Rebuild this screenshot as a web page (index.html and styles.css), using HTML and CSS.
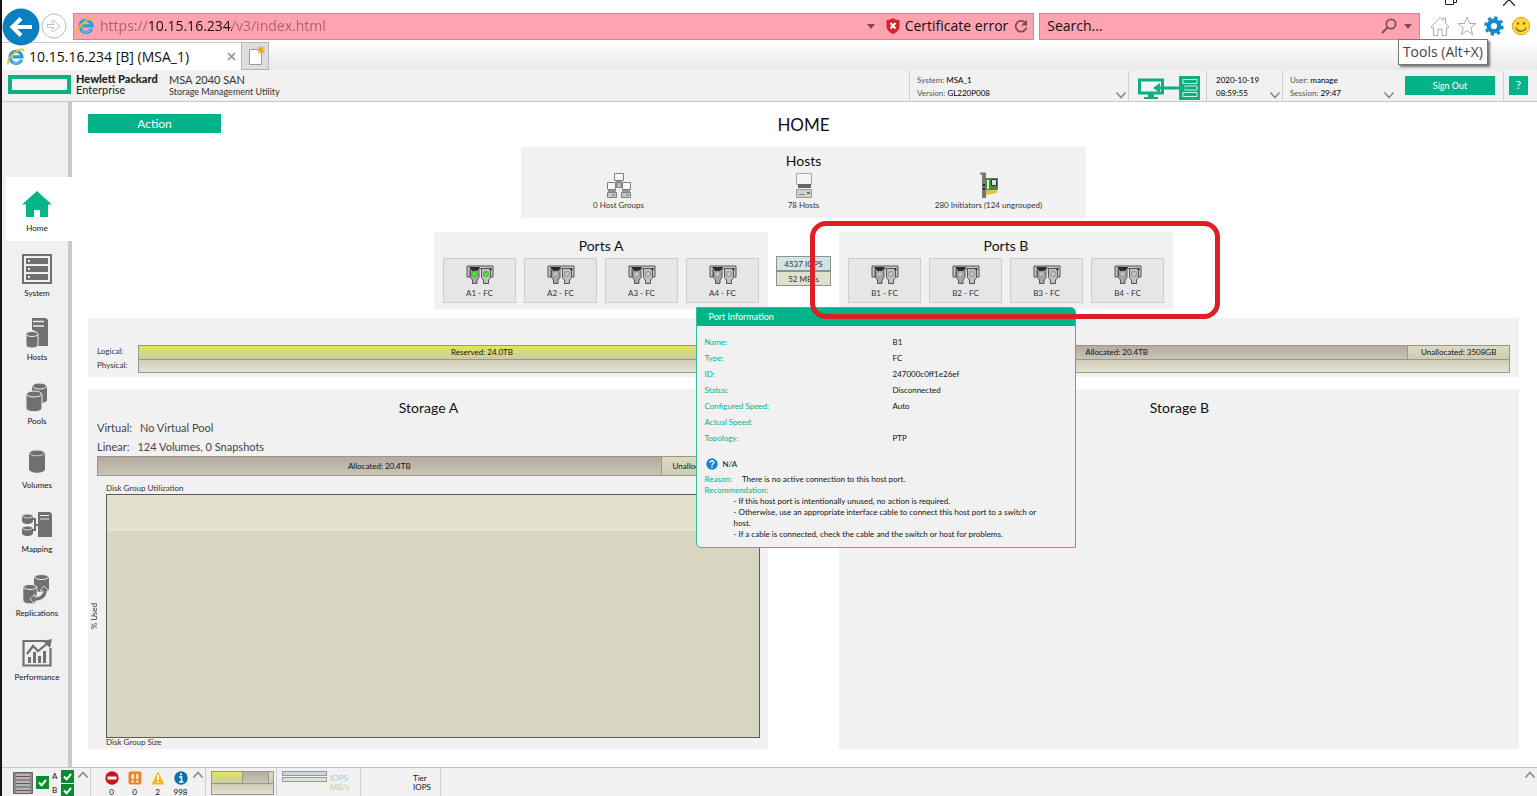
FILE: index.html
```html
<!DOCTYPE html>
<html lang="en">
<head>
<meta charset="utf-8">
<title>10.15.16.234 [B] (MSA_1)</title>
<link rel="stylesheet" href="styles.css">
</head>
<body>
<svg class="defs" width="0" height="0" aria-hidden="true">
  <defs>
    <symbol id="ie" viewBox="0 0 18 18">
      <path d="M14.6 11.6A6 6 0 1 1 15 8.800H5.500" fill="none" stroke="#2a9fdc" stroke-width="3.200"/>
      <path d="M14 12a5.600 5.600 0 0 1-9.500 1" fill="none" stroke="#7fd0f5" stroke-width="1"/>
      <path d="M1.500 16.500C-.5 14 3 8 8 4.500S17 0 16.500 3.500" fill="none" stroke="#f3b928" stroke-width="1.600"/>
    </symbol>
    <symbol id="down" viewBox="0 0 12 8"><path d="M1.500 1.500L6 6.500l4.500-5" fill="none" stroke="#8c8c8c" stroke-width="1.700"/></symbol>
    <symbol id="up" viewBox="0 0 12 8"><path d="M1.500 6.500L6 1.500l4.500 5" fill="none" stroke="#8c8c8c" stroke-width="1.700"/></symbol>
    <symbol id="port" viewBox="0 0 28 20">
      <path d="M1 1h26v11h-3V4H4v8H1z" fill="#c4c4c4" stroke="#555" stroke-width="1"/>
      <path d="M3 2h11l-2 3H6z" fill="#222"/>
      <path d="M4.500 5.500L6 3.500h5.500L13 5.500v7l-2 2.500v3.500H6.500V15l-2-2.500z" fill="#a9a9a9" stroke="#555"/>
      <path d="M15.500 3.500h8l1 2v7l-2 2.500v3.500h-5V15l-2-2.500z" fill="#c2c2c2" stroke="#555"/>
      <path d="M3.500 2h10l-2 3.500L7 7z" fill="#2a2a2a"/>
      <circle cx="8.500" cy="9" r="3" fill="currentColor" stroke="#8a8a8a" stroke-width=".6"/>
      <circle cx="20" cy="9" r="3" fill="currentColor" stroke="#8a8a8a" stroke-width=".6"/>
      <path d="M7.500 10l2-2M19 10l2-2" stroke="#eee" stroke-width=".8"/>
      <path d="M23.500 3.200h2v2h-2z" fill="#222"/>
    </symbol>
    <symbol id="check" viewBox="0 0 13 13"><path d="M0 0h13v13H0z" fill="#0b8a2f"/><path d="M3 6.500l2.600 2.800L10 4" fill="none" stroke="#fff" stroke-width="2"/></symbol>
  </defs>
</svg>

<header class="browser">
  <div class="address-row">
    <button class="nav-back" aria-label="Back"><svg viewBox="0 0 38 38"><circle cx="19" cy="19" r="18.500" fill="#0b7fc0"/><path d="M30 19H11M19 10.500L10.500 19l8.500 8.500" fill="none" stroke="#fff" stroke-width="4"/></svg></button>
    <button class="nav-forward" aria-label="Forward"><svg viewBox="0 0 26 26"><circle cx="13" cy="13" r="12" fill="#fff" stroke="#bdbdbd"/><path d="M6.500 11.500h6.500L10.500 9l1.500-2 7 6-7 6-1.500-2 2.500-2.500H6.500z" fill="#fff" stroke="#c0c0c0"/></svg></button>
    <div class="field url">
      <svg class="ie" aria-hidden="true"><use href="#ie"/></svg>
      <input class="url-input" type="text" aria-label="Address" value="https://10.15.16.234/v3/index.html">
      <svg class="caret" viewBox="0 0 8 5"><path d="M0 0h8L4 5z" fill="#7c4b53"/></svg>
      <svg class="shield" viewBox="0 0 14 16"><path d="M7 0c2 1.500 4 2 6.500 2v6c0 4-3 6.500-6.500 8C3.500 14.500.500 12 .500 8V2C3 2 5 1.500 7 0z" fill="#d3242c"/><path d="M4.500 5l5 5.500M9.500 5l-5 5.500" stroke="#fff" stroke-width="2"/></svg>
      <button class="cert">Certificate error</button>
      <button class="refresh" aria-label="Refresh"><svg viewBox="0 0 14 14"><path d="M11 3A5.400 5.400 0 1 0 12.400 8" fill="none" stroke="#77505a" stroke-width="1.800"/><path d="M13 0v6H7z" fill="#77505a"/></svg></button>
    </div>
    <div class="field search">
      <input class="search-input" type="text" aria-label="Search" value="Search...">
      <svg class="lens" viewBox="0 0 16 16"><circle cx="10" cy="6" r="4.700" fill="none" stroke="#80535c" stroke-width="1.800"/><path d="M6.500 9.500L1 15" stroke="#80535c" stroke-width="2.200"/></svg>
      <svg class="caret" viewBox="0 0 8 5"><path d="M0 0h8L4 5z" fill="#7c4b53"/></svg>
    </div>
    <div class="tools">
      <button aria-label="Home"><svg viewBox="0 0 20 20"><path d="M1 11L10 1.500l3 3V2h2.500v5l3.500 4-1.500 1-1-1v8.500H12V13H8v6.500H3.500V11l-1 1z" fill="#fff" stroke="#aaa"/></svg></button>
      <button aria-label="Favorites"><svg viewBox="0 0 20 20"><path d="M10 1l2.500 6.500h6.500l-5.300 4.200 2 7L10 14.500l-5.700 4.200 2-7L1 7.500h6.500z" fill="#fff" stroke="#aaa"/></svg></button>
      <button aria-label="Tools"><svg viewBox="0 0 20 20"><circle cx="10" cy="10" r="5.300" fill="none" stroke="#1687ca" stroke-width="4.400"/><circle cx="10" cy="10" r="8.300" fill="none" stroke="#1687ca" stroke-width="2.800" stroke-dasharray="3.260 3.260"/></svg></button>
      <button aria-label="Feedback"><svg viewBox="0 0 20 20"><circle cx="10" cy="10" r="8.700" fill="#ffd83d" stroke="#d9a820"/><circle cx="7" cy="7.500" r="1.300" fill="#8b6a12"/><circle cx="13" cy="7.500" r="1.300" fill="#8b6a12"/><path d="M5 11.500c1.500 5 8.500 5 10 0" fill="none" stroke="#8b6a12" stroke-width="1.300"/></svg></button>
    </div>
    <div class="window-controls" aria-hidden="true">
      <svg viewBox="0 0 12 6"><path d="M.500 0v4.500h8V0M8.500 2.500h3V0" fill="none" stroke="#222"/></svg>
      <svg viewBox="0 0 12 6"><path d="M0 6l6-6.500L12 6" fill="none" stroke="#222" stroke-width="1.200"/></svg>
    </div>
    <div class="tooltip" role="tooltip">Tools (Alt+X)</div>
  </div>
  <div class="tabs">
    <div class="tab"><svg class="ie" aria-hidden="true"><use href="#ie"/></svg><span class="tab-title">10.15.16.234 [B] (MSA_1)</span><button class="tab-close" aria-label="Close tab"><svg viewBox="0 0 9 9"><path d="M1 1l7 7M8 1L1 8" stroke="#8a8a8a" stroke-width="1.500"/></svg></button></div>
    <button class="new-tab" aria-label="New tab"><svg viewBox="0 0 18 20"><path d="M1.500 3.500h12v15h-12z" fill="#fff" stroke="#999"/><path d="M13 0v8M9 4h8M10 1l6 6M16 1l-6 6" stroke="#f0a62b" stroke-width="1.300"/></svg></button>
  </div>
</header>

<div class="app-header">
  <svg class="hpe" viewBox="0 0 63 19"><path d="M2 2h59v15H2z" fill="#f5f5f5" stroke="#0eb083" stroke-width="4"/></svg>
  <div class="brand"><b>Hewlett Packard</b><span>Enterprise</span></div>
  <div class="product"><span>MSA 2040 SAN</span><span class="product-sub">Storage Management Utility</span></div>
  <section class="cell system-cell"><p>System: <b>MSA_1</b></p><p>Version: <b>GL220P008</b></p><svg class="chev"><use href="#down"/></svg></section>
  <section class="cell link-cell"><svg viewBox="0 0 64 24"><path d="M2.500 4h23v13h-23z" fill="#f5f5f5" stroke="#0fae82" stroke-width="3"/><path d="M11 18h6v3h4v2H7v-2h4z" fill="#0fae82"/><path d="M42 0h21v24H42v-7l4-5-4-5z" fill="#0fae82"/><path d="M46 3.500h14v4H46zM48 10h12v4H48zM46 16.500h14v4H46z" fill="#0fae82" stroke="#cdeee2"/><path d="M21 12h25" stroke="#0fae82" stroke-width="3"/><path d="M16 12l7-5v10zM49 12l-7-5v10z" fill="#0fae82"/></svg></section>
  <section class="cell time-cell"><p><b>2020-10-19</b></p><p><b>08:59:55</b></p><svg class="chev"><use href="#down"/></svg></section>
  <section class="cell user-cell"><p>User: <b>manage</b></p><p>Session: <b>29:47</b></p><svg class="chev"><use href="#down"/></svg></section>
  <button class="green sign-out">Sign Out</button>
  <div class="help-cell"><button class="green help" aria-label="Help">?</button></div>
</div>

<div class="workspace">
  <nav class="sidebar">
    <a class="active" href="#home"><svg viewBox="0 0 30 30"><path d="M15 2L0 15.500h4V28h8v-7h6v7h8V15.500h4L26 12z" fill="#05b487"/></svg>Home</a>
    <a href="#system"><svg viewBox="0 0 30 30"><path d="M1 1h28v28H1z" fill="#efefef" stroke="#707070" stroke-width="2"/><path d="M4 4h22v6H4zM4 12h22v6H4zM4 20h22v6H4z" fill="#707070"/><path d="M6 6h2v2H6zM6 14h2v2H6zM6 22h2v2H6z" fill="#eee"/></svg>System</a>
    <a href="#hosts"><svg viewBox="0 0 30 30"><path d="M10 0h14l2 2v26H16V17c-1-4-5-5-6-5z" fill="#707070"/><path d="M11 3.500h11M11 8h11" stroke="#eee" stroke-width="1.500"/><path d="M4 16v11c0 4 12 4 12 0V16" fill="#707070" stroke="#eee"/><ellipse cx="10" cy="16" rx="6" ry="2.500" fill="#707070" stroke="#eee"/></svg>Hosts</a>
    <a href="#pools"><svg viewBox="0 0 30 30"><path d="M10 4v14c0 4 15 4 15 0V4" fill="#707070"/><ellipse cx="17.500" cy="4" rx="7" ry="3" fill="#707070" stroke="#eee"/><path d="M4 12v14c0 5 16 5 16 0V12" fill="#707070" stroke="#eee"/><ellipse cx="12" cy="12" rx="7.500" ry="3" fill="#707070" stroke="#eee"/></svg>Pools</a>
    <a href="#volumes"><svg viewBox="0 0 30 30"><path d="M7 7v16c0 5 16 5 16 0V7z" fill="#707070"/><ellipse cx="15" cy="7" rx="7.500" ry="2.800" fill="#707070" stroke="#ccc"/></svg>Volumes</a>
    <a href="#mapping"><svg viewBox="0 0 30 30"><path d="M16 2h12l2 2v23H16z" fill="#707070"/><path d="M18 5.500h9M18 9h9" stroke="#eee"/><path d="M10 9h3v11h-3M13 15h4" fill="none" stroke="#707070" stroke-width="2"/><path d="M0 6v5c0 4 11 4 11 0V6zM0 18v5c0 4 11 4 11 0v-5z" fill="#707070"/><ellipse cx="5.500" cy="6" rx="5" ry="2" fill="#707070" stroke="#eee" stroke-width=".8"/><ellipse cx="5.500" cy="18" rx="5" ry="2" fill="#707070" stroke="#eee" stroke-width=".8"/></svg>Mapping</a>
    <a href="#replications"><svg viewBox="0 0 30 30"><path d="M12 3v12c0 4 15 4 15 0V3" fill="#707070"/><ellipse cx="19.500" cy="3" rx="7" ry="2.500" fill="#707070" stroke="#eee"/><path d="M1 13v13c0 5 14 5 14 0V13" fill="#707070" stroke="#eee" stroke-width=".7"/><ellipse cx="8" cy="13" rx="6.500" ry="2.500" fill="#707070" stroke="#eee"/><path d="M8 25l5-5v3c5 0 8-3 8-6h-3l4-5 5 5h-2c0 6-5 10-12 10v3z" fill="#707070" stroke="#eee" stroke-width=".8"/></svg>Replications</a>
    <a href="#performance"><svg viewBox="0 0 30 30"><path d="M24 3H1.500v24.500h27V10" fill="none" stroke="#707070" stroke-width="2.200"/><path d="M5 16l6-8 5 5L26 5" fill="none" stroke="#707070" stroke-width="2.200"/><path d="M21 3l9-2-2 9z" fill="#707070"/><path d="M7.500 19v6M12.500 14v11M17.500 18v7M22.500 13v12" stroke="#707070" stroke-width="3"/></svg>Performance</a>
  </nav>

  <main class="main">
    <div class="title-row">
      <button class="green action">Action</button>
      <h1>HOME</h1>
    </div>

    <section class="panel hosts">
      <h2>Hosts</h2>
      <div class="host-items">
        <div class="host-item"><svg viewBox="0 0 26 26"><g fill="#f8f8f8" stroke="#808080"><path d="M8.500 1.500h9v7h-9zM1.500 10.500h8v7h-8zM16.500 10.500h8v7h-8z"/><path d="M1.500 20.500h9v5h-9zM15.500 20.500h9v5h-9z" fill="#c7c7c7"/><path d="M10.500 10.500h5v5h-5z" fill="#bbb"/></g><path d="M2 19h8M16 19h8M10 9h6" stroke="#777" stroke-width="1.500"/><path d="M6 23h3M20 23h3" stroke="#666"/></svg>0 Host Groups</div>
        <div class="host-item"><svg viewBox="0 0 26 26"><path d="M5.500 1.500h15v11h-15z" fill="#f5f5f5" stroke="#aaa"/><path d="M7 12h13v4H7z" fill="#666"/><path d="M5.500 17.500h15v8h-15z" fill="#d0d0d0" stroke="#999"/><path d="M8 22.500h6" stroke="#888"/><path d="M16 20h3v2h-3z" fill="#4c8d4c"/></svg>78 Hosts</div>
        <div class="host-item"><svg viewBox="0 0 26 26"><path d="M4 .500h6V26H6V2.500H4z" fill="#777"/><path d="M10 6h12v12H10z" fill="#43923b"/><path d="M10 18h11v3l-11 2z" fill="#e0c53b"/><path d="M15.500 7.500h5v6h-5z" fill="#ddd" stroke="#333"/><path d="M12 8v9" stroke="#d7ecd1" stroke-width="2"/><path d="M7 12h2v2H7zM7 16h2v2H7z" fill="#222"/></svg>280 Initiators (124 ungrouped)</div>
      </div>
    </section>

    <div class="split ports-row">
      <section class="panel ports">
        <h2>Ports A</h2>
        <div class="port-list">
          <button class="port on"><svg><use href="#port"/></svg>A1 - FC</button>
          <button class="port"><svg><use href="#port"/></svg>A2 - FC</button>
          <button class="port"><svg><use href="#port"/></svg>A3 - FC</button>
          <button class="port"><svg><use href="#port"/></svg>A4 - FC</button>
        </div>
      </section>
      <div class="rates"><span class="iops">4537 IOPS</span><span class="mbs">52 MB/s</span></div>
      <section class="panel ports">
        <h2>Ports B</h2>
        <div class="port-list">
          <button class="port"><svg><use href="#port"/></svg>B1 - FC</button>
          <button class="port"><svg><use href="#port"/></svg>B2 - FC</button>
          <button class="port"><svg><use href="#port"/></svg>B3 - FC</button>
          <button class="port"><svg><use href="#port"/></svg>B4 - FC</button>
        </div>
      </section>

      <aside class="popup">
        <h3>Port Information</h3>
        <div class="popup-body">
          <dl>
            <dt>Name:</dt><dd>B1</dd>
            <dt>Type:</dt><dd>FC</dd>
            <dt>ID:</dt><dd>247000c0ff1e26ef</dd>
            <dt>Status:</dt><dd>Disconnected</dd>
            <dt>Configured Speed:</dt><dd>Auto</dd>
            <dt>Actual Speed:</dt><dd></dd>
            <dt>Topology:</dt><dd>PTP</dd>
          </dl>
          <p class="health"><svg viewBox="0 0 12 12"><circle cx="6" cy="6" r="5.700" fill="#1482c8"/><path d="M4 4.700C4 2 8.200 2.200 8 4.500 7.900 5.800 6 5.700 6 7.500" fill="none" stroke="#fff" stroke-width="1.300"/><circle cx="6" cy="9.300" r=".8" fill="#fff"/></svg>N/A</p>
          <p class="reason"><em>Reason:</em><span>There is no active connection to this host port.</span></p>
          <p><em>Recommendation:</em></p>
          <div class="advice">
            <p>- If this host port is intentionally unused, no action is required.</p>
            <p>- Otherwise, use an appropriate interface cable to connect this host port to a switch or host.</p>
            <p>- If a cable is connected, check the cable and the switch or host for problems.</p>
          </div>
        </div>
      </aside>
      <div class="highlight" aria-hidden="true"></div>
    </div>

    <section class="panel capacity">
      <span>Logical:</span>
      <div class="bar"><div class="seg reserved">Reserved: 24.0TB</div><div class="seg allocated">Allocated: 20.4TB</div><div class="seg free">Unallocated: 3508GB</div></div>
      <span>Physical:</span>
      <div class="bar physical"></div>
    </section>

    <div class="split storage-row">
      <section class="panel storage">
        <h2>Storage A</h2>
        <p class="pool"><span>Virtual:</span>No Virtual Pool</p>
        <p class="pool"><span>Linear:</span>124 Volumes, 0 Snapshots</p>
        <div class="bar pool-bar"><div class="seg allocated">Allocated: 20.4TB</div><div class="seg free">Unallocated: 3508GB</div></div>
        <div class="usage">
          <span class="usage-title">Disk Group Utilization</span>
          <span class="usage-y">% Used</span>
          <div class="chart"></div>
          <span class="usage-x">Disk Group Size</span>
        </div>
      </section>
      <section class="panel storage"><h2>Storage B</h2></section>
    </div>
  </main>
</div>

<footer class="status">
  <div class="cell health-cell">
    <svg class="rack" viewBox="0 0 20 22"><path d="M.500.500h19v21H.500z" fill="#8a8a8a" stroke="#666"/><path d="M3 3h14M3 6h14M3 10h14M3 13h14M3 17h14M3 20h14" stroke="#e6dede" stroke-width="1"/><path d="M3 4.500h14M3 11.500h14M3 18.500h14" stroke="#7d4a50"/></svg>
    <svg class="tick"><use href="#check"/></svg>
    <div class="controllers"><span>A</span><svg class="tick"><use href="#check"/></svg><span>B</span><svg class="tick"><use href="#check"/></svg></div>
    <svg class="chev"><use href="#up"/></svg>
  </div>
  <div class="cell alerts">
    <span class="alert"><svg viewBox="0 0 14 14"><circle cx="7" cy="7" r="6.700" fill="#c4161c"/><path d="M2.500 5.500h9v3h-9z" fill="#fff"/></svg>0</span>
    <span class="alert"><svg viewBox="0 0 14 14"><rect x=".5" y=".5" width="13" height="13" rx="2" fill="#f08326"/><path d="M4.700 3v5M9.300 3v5M4.700 9.500v2M9.300 9.500v2" stroke="#fff" stroke-width="2"/></svg>0</span>
    <span class="alert"><svg viewBox="0 0 14 14"><path d="M7 .500L13.500 13.500H.500z" fill="#f5b51d"/><path d="M7 4v5M7 10.300v1.700" stroke="#fff" stroke-width="1.800"/></svg>2</span>
    <span class="alert"><svg viewBox="0 0 14 14"><circle cx="7" cy="7" r="6.700" fill="#0b6fa9"/><path d="M5 6h2.500v5M5 11h4.500" fill="none" stroke="#fff" stroke-width="1.600"/><circle cx="7" cy="3.300" r="1.100" fill="#fff"/></svg>998</span>
    <svg class="chev"><use href="#up"/></svg>
  </div>
  <div class="cell mini-cell"><div class="mini"><div class="bar"><div class="seg reserved"></div><div class="seg allocated"></div><div class="seg free"></div></div><div class="bar physical"></div></div></div>
  <div class="cell io-cell"><div class="io-bars"><i class="io-blue"></i><i class="io-green"></i></div><div class="io-labels"><span class="io-a">IOPS</span><span class="io-b">MB/s</span></div></div>
  <div class="cell tier-cell"><span>Tier</span><span>IOPS</span></div>
  <svg class="chev last"><use href="#up"/></svg>
</footer>
</body>
</html>
```

FILE: styles.css
```css
* { box-sizing: border-box; }
body {
  margin: 0;
  min-height: 100vh;
  display: flex;
  flex-direction: column;
  border-left: 2px solid #17171b;
  background: #fff;
  color: #111;
  font: 8px/12px Lato, "Open Sans", sans-serif;
}
h1, h2, h3, p, dl, dd { margin: 0; font-weight: 400; }
button, input { font: inherit; color: inherit; border: 0; padding: 0; background: none; }
button { cursor: pointer; }
svg { display: block; flex: none; }
a { color: inherit; text-decoration: none; }
em { font-style: normal; }
.defs { position: absolute; }

/* Browser frame */
.browser { font: 14px/20px "Open Sans", "Noto Sans", sans-serif; }
.address-row { position: relative; display: flex; align-items: center; height: 42px; padding: 12px 6px 2px 0; }
.nav-back svg { width: 38px; height: 38px; }
.nav-back { align-self: flex-start; height: 30px; margin: -4px 1px 0 0; z-index: 1; }
.nav-forward { margin-right: 6px; }
.nav-forward svg { width: 26px; height: 26px; }
.field { display: flex; align-items: center; height: 27px; background: #ffa3b1; border: 1px solid #d78391; }
.url { flex: 952 1 0; padding: 0 5px 0 3px; margin-right: 5px; }
.search { flex: 365 1 0; padding: 0 7px; }
.ie { width: 18px; height: 18px; }
.field input { flex: 1; min-width: 0; outline: 0; }
.url-input {
  margin-left: 5px;
  -webkit-text-fill-color: transparent;
  background: linear-gradient(90deg, #a4626d 48px, #1c0d10 48px 132px, #a4626d 132px);
  -webkit-background-clip: text;
  background-clip: text;
}
.caret { width: 8px; height: 5px; }
.shield { width: 14px; height: 16px; margin: 0 5px 0 11px; }
.cert { white-space: nowrap; }
.refresh { margin-left: 6px; }
.refresh svg { width: 14px; height: 15px; }
.lens { width: 16px; height: 16px; margin-right: 7px; }
.tools { display: flex; gap: 7px; margin-left: 10px; }
.tools svg { width: 20px; height: 20px; }
.window-controls { position: absolute; top: 0; right: 22px; display: flex; gap: 46px; }
.window-controls svg { width: 12px; height: 6px; }
.tooltip {
  position: absolute; top: 39px; right: 49px; z-index: 5;
  padding: 2px 4px; background: #fff; color: #444;
  border: 1px solid #777; box-shadow: 2px 2px 2px #777;
}
.tabs { display: flex; height: 28px; background: linear-gradient(#fdfdfd, #e9e9e9); }
.tab { display: flex; align-items: center; width: 239px; padding: 2px 5px; background: #fff; border-top: 1px solid #ccc; }
.tab-title { flex: 1; margin-left: 4px; white-space: nowrap; }
.tab-close svg { width: 9px; height: 9px; }
.new-tab { width: 28px; background: #dedede; border: 1px solid #b5b5b5; }
.new-tab svg { width: 18px; height: 20px; margin-left: 6px; }

/* Application header */
.app-header { display: flex; align-items: center; height: 32px; padding-left: 6px; background: #f1f1f1; border-bottom: 1px solid #c9c9c9; }
.hpe { width: 63px; height: 19px; margin: 0 5px 2px 0; }
.brand, .product { display: flex; flex-direction: column; align-self: flex-start; }
.brand { width: 93px; padding-top: 3px; font-size: 11px; line-height: 11px; color: #222; white-space: nowrap; }
.brand b { font-weight: 900; }
.product { flex: 1; padding-top: 4px; font-size: 11px; color: #333; }
.product-sub { font-size: 9px; }
.app-header .cell { position: relative; height: 30px; border-left: 1px solid #cfcfcf; padding: 3px 7px; line-height: 13px; color: #555; }
.cell b { font-weight: 400; color: #000; }
.system-cell { width: 219px; }
.link-cell { width: 78px; }
.link-cell svg { width: 64px; height: 24px; margin-top: 2px; margin-left: 1px; }
.app-header .time-cell { width: 76px; padding-left: 9px; }
.user-cell { width: 123px; }
.chev { width: 12px; height: 8px; }
.app-header .chev { position: absolute; right: 1px; bottom: 2px; }
.app-header .user-cell .chev { right: 10px; }
.green { background: #01b388; color: #fff; }
.sign-out { width: 90px; height: 19px; font-size: 9px; }
.help-cell { margin-left: 8px; padding: 5px 9px 5px 5px; border-left: 1px solid #cfcfcf; height: 30px; }
.help { width: 19px; height: 19px; font-size: 12px; }

/* Navigation */
.workspace { flex: 1; display: flex; }
.sidebar { width: 70px; padding: 75px 0 0 4px; background: #f0f0f0; border-right: 4px solid #c8c8c8; display: flex; flex-direction: column; }
.sidebar a { display: flex; flex-direction: column; align-items: center; gap: 3px; height: 64px; padding-top: 12px; }
.sidebar svg { width: 30px; height: 30px; }
.sidebar .active { background: #fff; margin: 0 -4px 1px 0; padding-right: 4px; }

/* Content */
.main { flex: 1; min-width: 0; display: flex; flex-direction: column; padding: 12px 18px 18px 16px; }
.title-row { display: grid; grid-template-columns: 1fr auto 1fr; height: 33px; }
.action { width: 133px; height: 19px; font-size: 12px; }
h1 { font-size: 17px; line-height: 22px; }
h2 { font-size: 14px; line-height: 16px; text-align: center; }
.panel { background: #f1f1f1; }
.hosts { align-self: center; width: 565px; padding: 6px 5px 7px; margin-bottom: 14px; }
.host-items { display: grid; grid-template-columns: repeat(3, 1fr); color: #333; }
.host-item { display: flex; flex-direction: column; align-items: center; padding-top: 3px; }
.host-item svg { width: 26px; height: 26px; margin-bottom: 1px; }
.split { display: grid; grid-template-columns: 1fr 71px 1fr; }
.ports-row { position: relative; margin-bottom: 9px; }
.ports { width: 334px; padding: 6px 9px; }
.ports:first-child { justify-self: end; }
.port-list { display: grid; grid-template-columns: repeat(4, 1fr); gap: 8px; margin-top: 4px; }
.port { display: flex; flex-direction: column; align-items: center; height: 45px; padding-top: 6px; background: #e6e6e6; border: 1px solid #cdcdcd; color: #333; }
.port svg { width: 28px; height: 20px; margin-bottom: 2px; color: #b5b5b5; }
.port.on svg { color: #35dd1c; }
.rates { justify-self: center; width: 55px; margin-top: 24px; color: #333; text-align: center; }
.rates span { display: block; height: 15px; border: 1px solid #8b9490; line-height: 14px; }
.iops { background: #d0e4e6; }
.mbs { background: #dfe2c9; }
.highlight { position: absolute; z-index: 4; left: calc(50% + 6px); top: -11px; width: 410px; height: 98px; border: 5px solid #df1f26; border-radius: 16px; pointer-events: none; }

.popup { position: absolute; z-index: 3; left: calc(50% - 108px); top: 75px; width: 380px; background: #f1f1f1; border: 1px solid #35bd99; border-radius: 0 5px 0 5px; overflow: hidden; }
.popup h3 { padding: 0 12px; font-size: 9px; line-height: 18px; background: #01b388; color: #fff; }
.popup-body { padding: 8px 8px 7px; line-height: 11px; }
.popup dl { display: grid; grid-template-columns: 178px 1fr; line-height: 16px; column-gap: 10px; grid-auto-rows: 16px; }
.popup dt, .popup em { color: #01b388; }
.health { display: flex; align-items: center; gap: 5px; margin: 12px 0 4px 1px; }
.health svg { width: 12px; height: 12px; }
.reason { display: flex; gap: 10px; line-height: 11px; }
.advice { padding: 0 20px 0 29px; }

.capacity { display: grid; grid-template-columns: 41px 1fr; padding: 27px 9px 4px; color: #333; line-height: 13px; }
.bar { display: flex; height: 14px; color: #111; text-align: center; border: 1px solid #989788; }
.capacity .bar:first-of-type { border-bottom: 0; }
.seg { display: flex; align-items: center; justify-content: center; white-space: nowrap; overflow: hidden; }
.seg + .seg { border-left: 1px solid #989788; }
.reserved { flex: 688; background: linear-gradient(#e2e55c, #cdcba8); }
.allocated { flex: 583; background: linear-gradient(#b4aaa1, #cac5b5); }
.free { flex: 101; background: linear-gradient(#dddac0, #cfccb5); }
.physical { background: linear-gradient(#cfccb8, #e5e2cf); }
.storage-row { flex: 1; margin-top: 12px; }
.storage { display: flex; flex-direction: column; padding: 11px 8px 3px 9px; }
.storage:last-child { grid-column: 3; }
.storage-row h2 { margin-bottom: 2px; }
.pool { font-size: 11px; line-height: 19px; color: #444; }
.pool span { margin-right: 8px; }
.pool-bar { height: 20px; flex: none; }
.usage { flex: 1; display: grid; grid-template-columns: 18px 1fr; grid-template-rows: 18px 1fr 8px; margin-left: -9px; color: #333; }
.usage-title { grid-column: 2; line-height: 24px; height: 18px; }
.usage-y { writing-mode: vertical-rl; transform: rotate(180deg); align-self: center; margin-right: 6px; line-height: 12px; }
.chart { border: 1px solid #5d5b50; background: linear-gradient(#e4e1cf 15%, #d8d5c1 15%); }
.usage-x { grid-column: 2; line-height: 8px; }

/* Status bar */
.status { display: flex; height: 29px; background: #f1f1f1; border-top: 1px solid #c4c4c4; }
.status .cell { display: flex; align-items: flex-start; border-right: 1px solid #cfcfcf; padding-top: 3px; }
.health-cell { width: 89px; gap: 3px; padding-left: 11px; }
.rack { width: 20px; height: 22px; margin-top: 1px; }
.tick { width: 13px; height: 13px; }
.health-cell > .tick { margin-top: 5px; }
.controllers { display: grid; grid-template-columns: 9px 13px; row-gap: 1px; margin-top: -1px; line-height: 13px; }
.alerts { width: 115px; padding-left: 9px; }
.alert { display: flex; flex-direction: column; align-items: center; width: 23px; line-height: 12px; }
.alert svg { width: 14px; height: 14px; margin-bottom: 1px; }
.mini-cell { width: 71px; padding-left: 5px; }
.mini { width: 63px; }
.mini .bar { height: 12px; }
.mini .bar:first-child { border-bottom: 0; }
.io-cell { width: 84px; padding-left: 5px; gap: 3px; }
.io-bars { width: 45px; }
.io-bars i { display: block; height: 5px; border: 1px solid #999; margin-bottom: 1px; }
.io-blue { background: #c6dadd; }
.io-green { background: #dfe2c9; }
.io-labels, .tier-cell { display: flex; flex-direction: column; line-height: 9px; padding-top: 3px; }
.io-a { color: #9ccbd2; }
.io-b { color: #c7cb9e; }
.status .tier-cell { width: 80px; padding-left: 52px; padding-top: 6px; align-items: flex-start; }
.last { margin: 3px 1px 0 auto; }
```
